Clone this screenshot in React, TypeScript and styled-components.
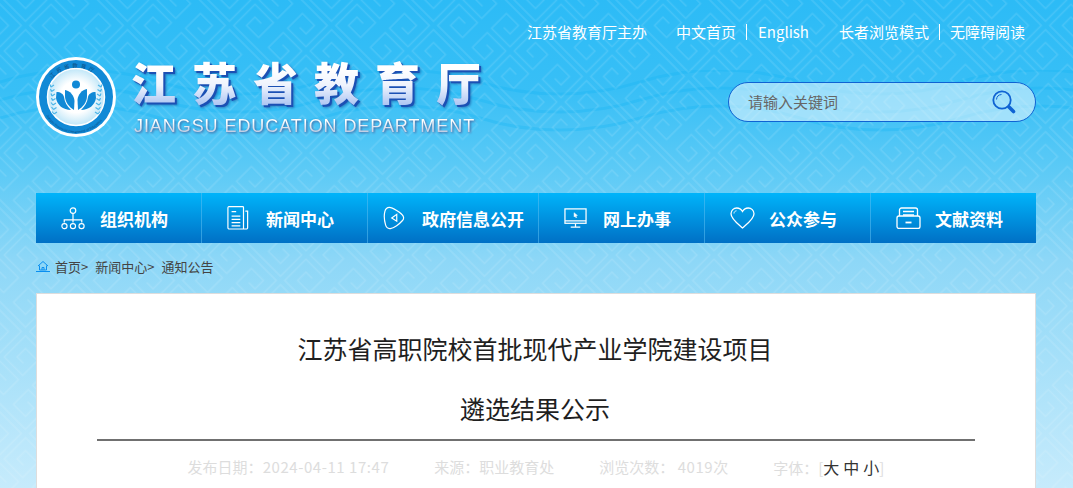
import React from "react";
import styled, { createGlobalStyle } from "styled-components";

const key = `<svg xmlns="http://www.w3.org/2000/svg" width="102" height="102"><defs><pattern id="k" width="72" height="72" patternUnits="userSpaceOnUse" patternTransform="rotate(45) scale(1.00173)"><path d="M0 3H33V33H7V12H24V24H15M72 3H39V33H65V12H48V24H57M0 69H33V39H7V60H24V48H15M72 69H39V39H65V60H48V48H57" fill="none" stroke="#fff" stroke-opacity=".12" stroke-width="1.5"/></pattern></defs><rect width="102" height="102" fill="url(#k)"/></svg>`;
const wave = `<svg xmlns="http://www.w3.org/2000/svg" width="320" height="70"><g fill="none" stroke="#18b4f3" stroke-opacity=".35" stroke-width="3"><path d="M0 12C50 -4 110 -4 160 12S270 28 320 12"/><path d="M0 30C50 14 110 14 160 30S270 46 320 30"/><path d="M0 48C50 32 110 32 160 48S270 64 320 48"/></g></svg>`;
const uri = (s: string) => `url("data:image/svg+xml,${encodeURIComponent(s)}")`;

const Global = createGlobalStyle`
  html, body { margin: 0; padding: 0; height: 100%; overflow: hidden; }
  body { font-family: "Noto Sans CJK SC", "Liberation Sans", sans-serif; }
  * { box-sizing: border-box; }
  a { color: inherit; text-decoration: none; }
`;

const Page = styled.div`
  height: 488px;
  overflow: hidden;
  padding: 0 37px 0 36px;
  background-image: ${uri(key)}, ${uri(wave)},
    linear-gradient(#2cbbf6 0, #38bff6 90px, #5ccaf6 170px, #8dd7f7 260px, #a6e0f9 360px, #c6ebfc 488px);
  background-repeat: repeat, repeat-x, no-repeat;
  background-position: 0 0, 0 70px, 0 0;
`;

const TopLinks = styled.div`
  display: flex;
  justify-content: flex-end;
  padding: 20px 11px 0 0;
  height: 44px;
  color: #fff;
  font-size: 15px;
  line-height: 24px;
`;

const LinkGroup = styled.div<{ $gap?: number }>`
  display: flex;
  align-items: center;
  margin-left: ${(p) => p.$gap ?? 30}px;
`;

const TopLink = styled.a<{ $divided?: number }>`
  display: block;
  line-height: 16px;
  ${(p) => p.$divided && `border-left: 1px solid #fff; margin-left: 10px; padding-left: ${p.$divided}px;`}
`;

const Brand = styled.div`
  display: flex;
  justify-content: space-between;
  margin-top: 13px;
  height: 80px;
`;

const Logo = styled.div`
  display: flex;
  gap: 15px;
`;

const Names = styled.div`
  display: flex;
  flex-direction: column;
  margin-top: -1px;
`;

const CnName = styled.h1`
  margin: 0;
  font-size: 45px;
  font-weight: 900;
  line-height: 52px;
  height: 59px;
  letter-spacing: 16px;
  white-space: nowrap;
  color: transparent;
  background: linear-gradient(#fff 22%, #eef3fd 50%, #a9c3f2 85%);
  -webkit-background-clip: text;
  background-clip: text;
  filter: drop-shadow(2px 2px 0 #1b50b4) drop-shadow(1px 1px 1px rgba(10, 50, 130, 0.45));
`;

const EnName = styled.div`
  margin-left: 3px;
  font-family: "Liberation Sans", sans-serif;
  font-size: 18px;
  line-height: 22px;
  letter-spacing: 0.93px;
  white-space: nowrap;
  color: transparent;
  background: linear-gradient(#fff 30%, #c3cfe4 75%);
  -webkit-background-clip: text;
  background-clip: text;
  filter: drop-shadow(1px 1px 1px #45609a);
`;

const Search = styled.div`
  display: flex;
  align-items: center;
  justify-content: space-between;
  align-self: flex-start;
  width: 308px;
  height: 40px;
  margin-top: 25px;
  padding: 0 19px 1px 19px;
  border: 1px solid #0f63d3;
  border-radius: 20px;
  background: rgba(255, 255, 255, 0.5);
  color: #666;
  font-size: 15px;
`;

const Nav = styled.nav`
  display: flex;
  height: 50px;
  margin-top: 56px;
  background: linear-gradient(#00b4fa, #0070c5);
`;

const NavItem = styled.a<{ $width: number; $inset?: number }>`
  display: flex;
  align-items: center;
  flex: 0 0 ${(p) => p.$width}px;
  padding-left: ${(p) => p.$inset ?? 24}px;
  border-right: 1px solid rgba(90, 190, 240, 0.55);
  color: #fff;
  font-size: 17px;
  font-weight: 700;
  &:last-child { border-right: 0; }
`;

const NavIcon = styled.span`
  display: flex;
  flex: 0 0 40px;
  padding-left: 1px;
`;

const Crumbs = styled.div`
  display: flex;
  align-items: center;
  height: 50px;
  padding-bottom: 4px;
  color: #444;
  font-size: 13px;
`;

const CrumbLink = styled.a`
  margin-right: 7px;
`;

const CrumbHome = styled.a`
  display: flex;
  margin-right: 5px;
`;

const Card = styled.main`
  height: 300px;
  padding: 24px 60px 0;
  background: #fff;
  border: 1px solid #ddd;
  border-bottom: 0;
`;

const Heading = styled.h2`
  margin: 0;
  padding: 0 2px 0 0;
  border-bottom: 2px solid #707070;
  height: 123px;
  color: #1f1f1f;
  font-size: 25px;
  font-weight: 400;
  line-height: 60px;
  text-align: center;
`;

const Meta = styled.div`
  display: flex;
  justify-content: center;
  gap: 45px;
  margin-top: 14px;
  color: #ddd;
  font-size: 15px;
  line-height: 24px;
  white-space: nowrap;
`;

const Num = styled.span`
  letter-spacing: 0.55px;
`;

const SizeLink = styled.a`
  margin-right: 4px;
  color: #333;
  font-size: 16px;
  &:last-of-type { margin-right: 0; }
`;

const stroke = { fill: "none", stroke: "#fff", strokeWidth: 1.3 };

const OrgIcon = () => (
  <svg width="24" height="24" viewBox="0 0 26 26" {...stroke}>
    <circle cx="13" cy="5" r="3" />
    <path d="M13 8v7M3.500 18v-3h19v3M13 15v3" />
    <rect x="1" y="19" width="5.500" height="5.500" rx="2.500" />
    <rect x="10.200" y="19" width="5.500" height="5.500" rx="2.500" />
    <rect x="19.500" y="19" width="5.500" height="5.500" rx="2.500" />
  </svg>
);

const DocIcon = () => (
  <svg width="22" height="24" viewBox="0 0 24 26" {...stroke}>
    <path d="M18 3.500V1.500a1 1 0 0 0-1-1H2.500a1.500 1.500 0 0 0-1.500 1.500v21.500a1.500 1.500 0 0 0 1.500 1.500H21a1.500 1.500 0 0 0 1.500-1.500V5.500H20M18 3.500V25" />
    <path d="M5 6h5M5 11h9.500M5 14.500h9.500M5 18h9.500M5 21.500h9.500" />
  </svg>
);

const PlayIcon = () => (
  <svg width="22" height="24" viewBox="0 0 24 26" {...stroke}>
    <path d="M7 1.500c3 0 13 6 15 9.500 1 2 .5 3.500-1 5-3 3.500-9 8-13 8.500-3 .3-4.500-1.500-5.200-4C1.500 16 1 10 2 6c.7-2.800 2.500-4.500 5-4.500z" />
    <path d="M15 9v7.500L9.500 13z" />
  </svg>
);

const ScreenIcon = () => (
  <svg width="23" height="22" viewBox="0 0 24 22" {...stroke}>
    <rect x="1" y="1.500" width="22" height="15" />
    <path d="M1 14h22M12 17v3M7 20.500h10" />
    <path d="M10.500 5.500l3.500 2.800-1.600.3.800 1.800-.8.300-.8-1.800-1.100 1z" fill="#fff" strokeWidth=".5" />
  </svg>
);

const HeartIcon = () => (
  <svg width="25" height="22" viewBox="0 0 25 22" {...stroke}>
    <path d="M12.500 21C8 17 1 12 1 6.800 1 3.400 3.600 1 6.800 1c2.400 0 4.500 1.400 5.700 3.500C13.700 2.400 15.800 1 18.200 1 21.400 1 24 3.400 24 6.800 24 12 17 17 12.500 21z" />
    <path d="M4 6.500C4 5 5 4 6.500 3.800" strokeWidth=".9" />
  </svg>
);

const TrayIcon = () => (
  <svg width="25" height="22" viewBox="0 0 25 22" {...stroke}>
    <path d="M3.500 9V3a2 2 0 0 1 2-2h14a2 2 0 0 1 2 2v6" />
    <path d="M7 4.500h11M7 8h11" />
    <path d="M1 11a2 2 0 0 1 2-2h19a2 2 0 0 1 2 2v8.500a2 2 0 0 1-2 2H3a2 2 0 0 1-2-2z" />
    <path d="M9.500 15.500h6" strokeWidth="1.800" />
  </svg>
);

const HomeIcon = () => (
  <svg width="14" height="12" viewBox="0 0 14 12" fill="none" stroke="#0a8ff0" strokeWidth="1">
    <path d="M2 6L7 1.500 12 6M3.500 5.500V10h7V5.500M6 10V7.500h2V10M0 11.500h14" />
  </svg>
);

const SearchIcon = () => (
  <svg width="24" height="24" viewBox="0 0 24 24" fill="none" stroke="#0f63d3">
    <circle cx="10" cy="10" r="8.700" strokeWidth="1.800" />
    <path d="M4.500 9.500A5.500 5.500 0 0 1 9.500 4.500" strokeWidth="1" />
    <path d="M17 17l4.500 4.500" strokeWidth="3.600" strokeLinecap="round" />
  </svg>
);

const leaves = [0, 1, 2, 3, 4, 5, 6];

const Emblem = () => (
  <svg width="80" height="80" viewBox="0 0 80 80">
    <defs>
      <radialGradient id="disc">
        <stop offset="0.55" stopColor="#fff" />
        <stop offset="1" stopColor="#bfe6f8" />
      </radialGradient>
      <path id="upper" d="M8.500 42a31.500 31.500 0 0 1 63 0" />
      <path id="lower" d="M6 42a34 34 0 0 0 68 0" />
    </defs>
    <circle cx="40" cy="40" r="40" fill="#fff" />
    <circle cx="40" cy="40" r="37" fill="#1189d6" />
    <circle cx="40" cy="40" r="28.500" fill="url(#disc)" stroke="#fff" strokeWidth="1.500" />
    <text fontSize="5.500" fill="#0b4f86" fontFamily="Noto Sans CJK SC, sans-serif" letterSpacing="2.500">
      <textPath href="#upper" startOffset="22%">江苏省教育厅</textPath>
    </text>
    <text fontSize="3.400" fill="#0b4f86" fontFamily="Liberation Sans, sans-serif">
      <textPath href="#lower" startOffset="16%">Jiangsu Provincial Department of Education</textPath>
    </text>
    <circle cx="40" cy="27.500" r="4" fill="#1189d6" />
    <g fill="#1189d6">
      <path d="M29 33c5 1 9 5 9.500 11l-.5 9c-5-3-9-8-9-14z" />
      <path d="M51 32c-5 1-9 5-9.500 11l.5 10c5-3 9-8 9-14z" />
      <path d="M20.500 35c4 0 7 2 7.500 5 .5 5 3 9 7 13-8 0-14-5-15-12z" />
      <path d="M59.500 35c-4 0-7 2-7.500 5-.5 5-3 9-7 13 8 0 14-5 15-12z" />
    </g>
    <g fill="none" stroke="#4db5e8" strokeWidth="1.200">
      {leaves.map((i) => (
        <g key={i}>
          <path d={`M${15 + i * 0.5} ${30 + i * 4.5}l${i < 4 ? -1 : -2} -2.500M${15 + i * 0.5} ${30 + i * 4.5}l3 -2`} />
          <path d={`M${65 - i * 0.5} ${30 + i * 4.5}l${i < 4 ? 1 : 2} -2.500M${65 - i * 0.5} ${30 + i * 4.5}l-3 -2`} />
        </g>
      ))}
    </g>
  </svg>
);

const menu = [
  { label: "组织机构", width: 166, icon: <OrgIcon /> },
  { label: "新闻中心", width: 166, icon: <DocIcon /> },
  { label: "政府信息公开", width: 171, inset: 14, icon: <PlayIcon /> },
  { label: "网上办事", width: 166, icon: <ScreenIcon /> },
  { label: "公众参与", width: 166, icon: <HeartIcon /> },
  { label: "文献资料", width: 165, icon: <TrayIcon /> },
];

export default function App() {
  return (
    <Page>
      <Global />
      <TopLinks>
        <LinkGroup><TopLink>江苏省教育厅主办</TopLink></LinkGroup>
        <LinkGroup $gap={29}>
          <TopLink>中文首页</TopLink>
          <TopLink $divided={11}>English</TopLink>
        </LinkGroup>
        <LinkGroup>
          <TopLink>长者浏览模式</TopLink>
          <TopLink $divided={10}>无障碍阅读</TopLink>
        </LinkGroup>
      </TopLinks>
      <Brand>
        <Logo>
          <Emblem />
          <Names>
            <CnName>江苏省教育厅</CnName>
            <EnName>JIANGSU EDUCATION DEPARTMENT</EnName>
          </Names>
        </Logo>
        <Search>
          请输入关键词
          <SearchIcon />
        </Search>
      </Brand>
      <Nav>
        {menu.map((m) => (
          <NavItem key={m.label} $width={m.width} $inset={m.inset}>
            <NavIcon>{m.icon}</NavIcon>
            {m.label}
          </NavItem>
        ))}
      </Nav>
      <Crumbs>
        <CrumbHome><HomeIcon /></CrumbHome>
        <CrumbLink>首页&gt;</CrumbLink>
        <CrumbLink>新闻中心&gt;</CrumbLink>
        <CrumbLink>通知公告</CrumbLink>
      </Crumbs>
      <Card>
        <Heading>
          江苏省高职院校首批现代产业学院建设项目
          <br />
          遴选结果公示
        </Heading>
        <Meta>
          <span>发布日期：<Num>2024-04-11 17:47</Num></span>
          <span>来源：职业教育处</span>
          <span>浏览次数： <Num>4019</Num>次</span>
          <span>
            字体：[<SizeLink>大</SizeLink>
            <SizeLink>中</SizeLink>
            <SizeLink>小</SizeLink>]
          </span>
        </Meta>
      </Card>
    </Page>
  );
}
